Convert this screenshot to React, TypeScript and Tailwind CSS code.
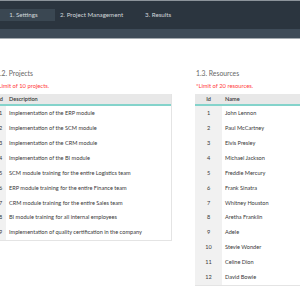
import React from 'react';

const projects = [
  'Implementation of the ERP module',
  'Implementation of the SCM module',
  'Implementation of the CRM module',
  'Implementation of the BI module',
  'SCM module training for the entire Logistics team',
  'ERP module training for the entire Finance team',
  'CRM module training for the entire Sales team',
  'BI module training for all internal employees',
  'Implementation of quality certification in the company',
];

const resources = [
  'John Lennon',
  'Paul McCartney',
  'Elvis Presley',
  'Michael Jackson',
  'Freddie Mercury',
  'Frank Sinatra',
  'Whitney Houston',
  'Aretha Franklin',
  'Adele',
  'Stevie Wonder',
  'Celine Dion',
  'David Bowie',
];

const font = { fontFamily: 'Lato, "Open Sans", sans-serif' };

const Table: React.FC<{ rows: string[]; head: string; idWidth: string; width: string }> = ({ rows, head, idWidth, width }) => {
  return (
    <div className={`${width} border-r border-b border-[#e4e4e4] text-[5.6px] text-[#383838]`}>
      <div className="flex h-[10px] items-center bg-[#e8e8e8] border-b-2 border-[#84d3cb] box-content">
        <div className={`${idWidth} text-center font-semibold`}>Id</div>
        <div className="pl-[3px] font-semibold">{head}</div>
      </div>
      {rows.map((r, i) => (
        <div key={i} className="flex h-[14.9px] items-center">
          <div className={`${idWidth} h-full flex items-center justify-center bg-[#f1f1f1]`}>{i + 1}</div>
          <div className="pl-[3px] whitespace-nowrap">{r}</div>
        </div>
      ))}
    </div>
  );
};

export default function App() {
  return (
    <div className="w-[300px] h-[300px] overflow-hidden bg-white" style={font}>
      <div className="h-px bg-[#8c949b]" />
      <div className="h-[28px] bg-[#2b353f] flex items-center text-[6.2px] text-[#d3d8dc] -ml-[8px]">
        <div className="w-[63px] h-[12px] bg-[#3a4752] flex items-center justify-center">1. Settings</div>
        <div className="ml-[5px]">2. Project Management</div>
        <div className="ml-[22px]">3. Results</div>
      </div>
      <div className="h-[9px] bg-[#3e4b58]" />
      <div className="h-px bg-[#a3aab0]" />

      <div className="flex gap-[23px] -ml-[5px] pt-[30px]">
        <div className="w-[177px] shrink-0">
          <div className="h-[9px] leading-[9px] pl-px text-[6.8px] text-[#666]">1.2. Projects</div>
          <div className="mt-[3px] h-[9px] leading-[9px] pl-px text-[5.8px] text-[#ff3b3b]">*Limit of 10 projects.</div>
          <div className="mt-[4px]">
            <Table rows={projects} head="Description" idWidth="w-[11px]" width="w-[177px]" />
          </div>
        </div>
        <div className="w-[140px] shrink-0">
          <div className="h-[9px] leading-[9px] pl-px text-[6.8px] text-[#666]">1.3. Resources</div>
          <div className="mt-[3px] h-[9px] leading-[9px] pl-px text-[5.8px] text-[#ff3b3b]">*Limit of 20 resources.</div>
          <div className="mt-[4px]">
            <Table rows={resources} head="Name" idWidth="w-[27px]" width="w-[140px]" />
          </div>
        </div>
      </div>
    </div>
  );
}
